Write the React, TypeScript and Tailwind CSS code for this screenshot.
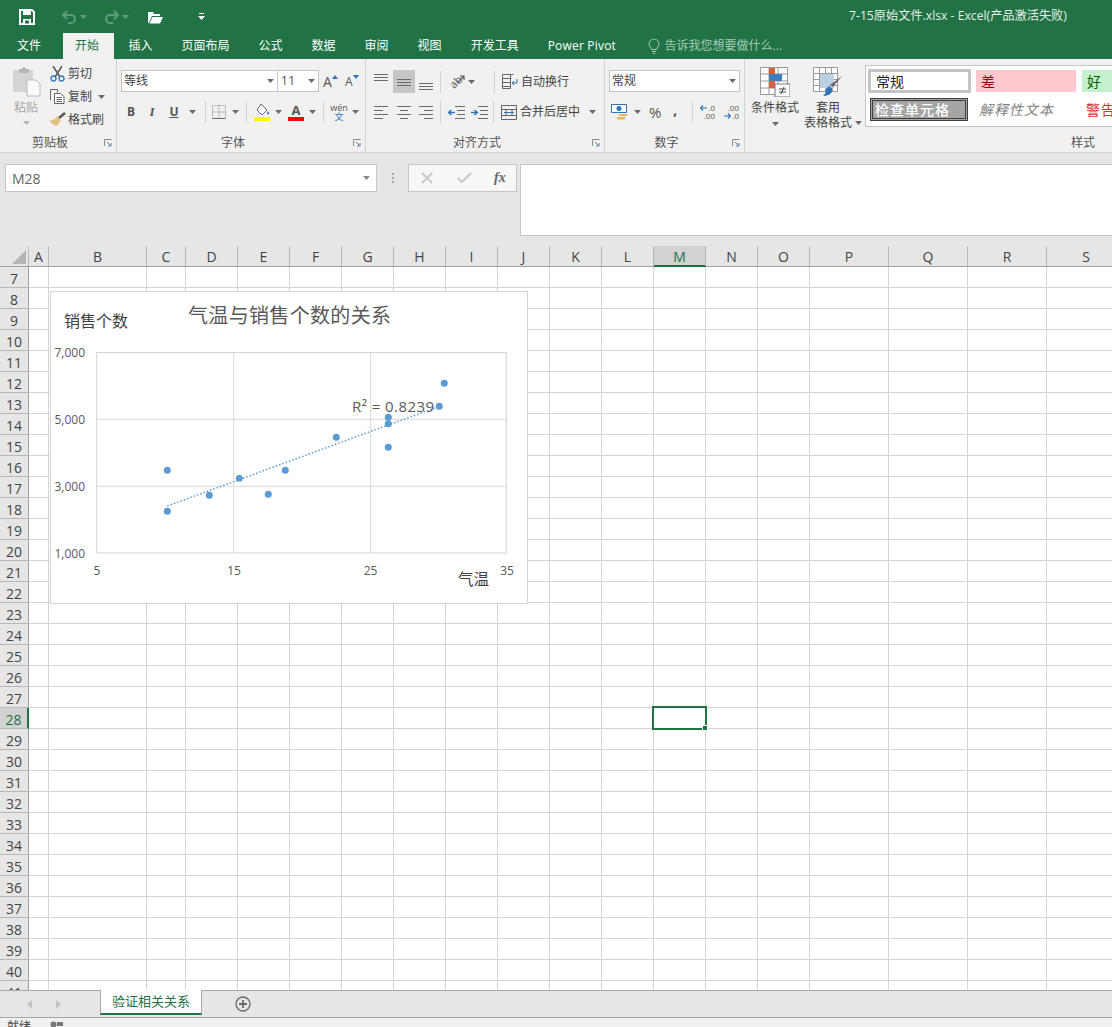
const quickGreen = "#5f9c7c";

const tabs = ["插入", "页面布局", "公式", "数据", "审阅", "视图", "开发工具"];
const columns = ["A", "B", "C", "D", "E", "F", "G", "H", "I", "J", "K", "L", "M", "N", "O", "P", "Q", "R", "S"];
const rows = Array.from({ length: 35 }, (_, i) => i + 7);
const sheetCols = "grid grid-cols-[29px_20px_98px_39px_52px_52px_52px_52px_52px_52px_52px_52px_52px_52px_52px_52px_79px_79px_79px_79px]";

const points = [
  [167.3, 470.3],
  [167.3, 511.3],
  [209.3, 495.3],
  [239.3, 478.3],
  [268.3, 494.3],
  [285.3, 470.3],
  [336.3, 437.3],
  [388.3, 447.3],
  [388.3, 423.7],
  [388.3, 417.3],
  [439.3, 406.3],
  [444.3, 383.3],
];

function Caret({ color = "#6a6a6a" }: { color?: string }) {
  return (
    <svg width="7" height="4" viewBox="0 0 7 4" className="shrink-0">
      <path d="M0 0h7L3.5 4z" fill={color} />
    </svg>
  );
}

function Sep() {
  return <div className="h-[22px] w-px shrink-0 bg-[#d2d2d2]" />;
}

function Launcher() {
  return (
    <svg width="8" height="8" viewBox="0 0 8 8" className="shrink-0">
      <path d="M.5 7V.5H7.5" fill="none" stroke="#8a8a8a" />
      <path d="M3 3l3.5 3.5M7 4v3H4" fill="none" stroke="#5f7f9f" />
    </svg>
  );
}

function Group({ width, label, children }: { width: string; label: string; children: React.ReactNode }) {
  return (
    <div className={`${width} flex shrink-0 flex-col border-r border-[#d2d2d2]`}>
      <div className="h-[74px]">{children}</div>
      <div className="flex h-[19px] items-center">
        <span className="flex-1 text-center text-[12px] leading-none text-[#555]">{label}</span>
        <span className="flex w-[16px] justify-center">
          <Launcher />
        </span>
      </div>
    </div>
  );
}

function Lines({ kind }: { kind: "left" | "center" | "right" }) {
  const d = {
    left: "M0 .5h14M0 4.5h9M0 8.5h14M0 12.5h9",
    center: "M0 .5h14M3 4.5h8M0 8.5h14M3 12.5h8",
    right: "M0 .5h14M5 4.5h9M0 8.5h14M5 12.5h9",
  }[kind];
  return (
    <svg width="14" height="13" viewBox="0 0 14 13">
      <path d={d} stroke="#6a6a6a" fill="none" />
    </svg>
  );
}

function VAlign({ top }: { top: number }) {
  return (
    <svg width="14" height="16" viewBox="0 0 14 16">
      <path d={`M0 ${top + 0.5}h14M0 ${top + 3.5}h14M0 ${top + 6.5}h14`} stroke="#6a6a6a" fill="none" />
    </svg>
  );
}

function Indent({ flip }: { flip?: boolean }) {
  return (
    <svg width="17" height="13" viewBox="0 0 17 13">
      <path d="M7 .5h10M9 4.500h8M9 8.500h8M7 12.500h10" stroke="#6a6a6a" fill="none" />
      {flip ? (
        <path d="M0 6.500h6M3.500 4l3 2.500-3 2.500" stroke="#2f75b5" strokeWidth="1.400" fill="none" />
      ) : (
        <path d="M7 6.500H1M3.500 4l-3 2.500 3 2.500" stroke="#2f75b5" strokeWidth="1.400" fill="none" />
      )}
    </svg>
  );
}

function DecimalArrow({ right }: { right?: boolean }) {
  return (
    <svg width="7" height="6" viewBox="0 0 7 6" className="shrink-0">
      {right ? (
        <path d="M0 3h6M4 .5L6.500 3 4 5.500" stroke="#2f75b5" strokeWidth="1.200" fill="none" />
      ) : (
        <path d="M7 3H1M3 .5L.5 3 3 5.500" stroke="#2f75b5" strokeWidth="1.200" fill="none" />
      )}
    </svg>
  );
}

function TitleBar() {
  return (
    <div className="flex h-[33px] shrink-0 items-center bg-[#217346]">
      <svg width="16" height="16" viewBox="0 0 16 16" className="ml-[19px]">
        <path d="M1 1h12l2 2v12H1z" fill="none" stroke="#fff" strokeWidth="2" />
        <path d="M4 1h8v5H4z" fill="#fff" />
        <path d="M4 10h8v5H4z" fill="#fff" />
        <path d="M6 11.500h4v3H6z" fill="#217346" />
      </svg>
      <svg width="15" height="14" viewBox="0 0 15 14" className="ml-[27px]">
        <path d="M5 1L1 5l4 4M1 5h8a4 4 0 0 1 0 8H6" fill="none" stroke={quickGreen} strokeWidth="2" />
      </svg>
      <span className="ml-[3px]">
        <Caret color={quickGreen} />
      </span>
      <svg width="15" height="14" viewBox="0 0 15 14" className="ml-[17px]">
        <path d="M10 1l4 4-4 4M14 5H6a4 4 0 0 0 0 8h3" fill="none" stroke={quickGreen} strokeWidth="2" />
      </svg>
      <span className="ml-[3px]">
        <Caret color={quickGreen} />
      </span>
      <svg width="17" height="14" viewBox="0 0 17 14" className="ml-[18px]">
        <path d="M1 13V2h5l1 2h6v2H5L2 13z" fill="#fff" />
        <path d="M5.500 7H16l-3 6.500H2.500z" fill="#fff" />
      </svg>
      <svg width="7" height="8" viewBox="0 0 7 8" className="ml-[34px]">
        <path d="M1 .5h5" stroke="#fff" />
        <path d="M0 3h7L3.500 7z" fill="#fff" />
      </svg>
      <span className="ml-[644px] whitespace-nowrap text-[12.200px] text-[#e4efe9]">7-15原始文件.xlsx - Excel(产品激活失败)</span>
    </div>
  );
}

function TabBar() {
  return (
    <div className="flex h-[26px] shrink-0 items-stretch bg-[#217346] pl-[2px] text-[12px] text-white">
      <div className="flex items-center px-[15px]">文件</div>
      <div className="ml-[7px] flex items-center bg-[#f1f1f1] pl-[12px] pr-[15px] text-[#217346]">开始</div>
      {tabs.map((tab) => (
        <div key={tab} className="flex items-center whitespace-nowrap px-[14.500px]">
          {tab}
        </div>
      ))}
      <div className="flex items-center whitespace-nowrap px-[14.500px] tracking-[0.2px]">Power Pivot</div>
      <div className="ml-[17px] flex items-center text-[#a5cbb6]">
        <svg width="12" height="15" viewBox="0 0 12 15">
          <path d="M3.500 10.500C3.500 8.500 1 7.500 1 5a5 5 0 0 1 10 0c0 2.500-2.500 3.500-2.500 5.500zM4 12.500h4M5 14.500h2" fill="none" stroke="#a5cbb6" />
        </svg>
        <span className="ml-[5px] whitespace-nowrap">告诉我您想要做什么...</span>
      </div>
    </div>
  );
}

function ClipboardGroup() {
  return (
    <Group width="w-[117px]" label="剪贴板">
      <div className="flex h-full">
        <div className="ml-[11px] flex w-[30px] flex-col items-center pt-[7px]">
          <svg width="29" height="31" viewBox="0 0 29 31">
            <path d="M1 4h20v22H1z" fill="#d4d4d4" />
            <path d="M7 3h3a2 2 0 0 1 4 0h3v4H7z" fill="#b5b5b5" />
            <path d="M15 14h9l4 4v12H15z" fill="#fafafa" stroke="#b9b9b9" />
          </svg>
          <span className="mt-[3px] text-[12px] leading-[16px] text-[#a6a6a6]">粘贴</span>
          <span className="mt-[5px]">
            <Caret color="#b5b5b5" />
          </span>
        </div>
        <div className="ml-[9px] flex flex-col pt-[3px] text-[12px] text-[#444]">
          <div className="flex h-[23px] items-center">
            <svg width="15" height="16" viewBox="0 0 15 16">
              <path d="M3 0l7 11M12 0L5 11" stroke="#555" strokeWidth="1.500" fill="none" />
              <circle cx="3.500" cy="12.500" r="2.500" fill="none" stroke="#2b79c2" strokeWidth="1.300" />
              <circle cx="11.500" cy="12.500" r="2.500" fill="none" stroke="#2b79c2" strokeWidth="1.300" />
            </svg>
            <span className="ml-[3px]">剪切</span>
          </div>
          <div className="flex h-[23px] items-center">
            <svg width="15" height="15" viewBox="0 0 15 15">
              <path d="M.5 11V.500h7v3" fill="none" stroke="#666" />
              <path d="M4.500 4.500h6l3.500 3v7H4.500z" fill="#fff" stroke="#666" />
              <path d="M6.500 8.500h5.500M6.500 10.500h5.500M6.500 12.500h5.500" stroke="#666" />
            </svg>
            <span className="ml-[3px]">复制</span>
            <span className="ml-[6px]">
              <Caret />
            </span>
          </div>
          <div className="-ml-[1px] flex h-[23px] items-center">
            <svg width="17" height="15" viewBox="0 0 17 15">
              <path d="M10 6l6-5" stroke="#555" strokeWidth="2.500" fill="none" />
              <path d="M8 4l4 4-4 6c-3-.5-6-3-8-5.500 3 .5 6-1 8-4.500z" fill="#e0c283" />
            </svg>
            <span className="ml-[2px]">格式刷</span>
          </div>
        </div>
      </div>
    </Group>
  );
}

function FontGroup() {
  return (
    <Group width="w-[249px]" label="字体">
      <div className="pl-[4px] pt-[11px]">
        <div className="flex h-[22px] items-stretch">
          <div className="flex w-[157px] items-center justify-between border border-[#c6c6c6] bg-white pl-[2px] pr-[3px] text-[12px] text-[#444]">
            等线
            <Caret />
          </div>
          <div className="flex w-[41px] items-center justify-between border border-l-0 border-[#c6c6c6] bg-white pl-[3px] pr-[3px] text-[12px] tracking-[0.5px] text-[#555]">
            11
            <Caret />
          </div>
          <div className="relative ml-[4px] flex w-[16px] items-center text-[14px] text-[#555]">
            A
            <svg width="6" height="4" viewBox="0 0 6 4" className="mb-[9px]">
              <path d="M0 4h6L3 0z" fill="#2f75b5" />
            </svg>
          </div>
          <div className="ml-[6px] flex w-[16px] items-center pt-[1px] text-[12px] text-[#555]">
            A
            <svg width="6" height="4" viewBox="0 0 6 4" className="mb-[10px]">
              <path d="M0 0h6L3 4z" fill="#2f75b5" />
            </svg>
          </div>
        </div>
        <div className="mt-[9px] flex h-[22px] items-center text-[#555]">
          <span className="w-[20px] text-center text-[12px] font-bold">B</span>
          <span className="w-[22px] text-center font-['Liberation_Serif',serif] text-[13px] font-bold italic">I</span>
          <span className="w-[22px] text-center text-[12px] font-bold underline">U</span>
          <span className="flex w-[14px] justify-center">
            <Caret />
          </span>
          <span className="flex w-[7px] justify-end">
            <Sep />
          </span>
          <span className="flex w-[26px] justify-center">
            <svg width="14" height="14" viewBox="0 0 14 14">
              <path d="M.5.500h13v13H.500zM7 .5v13M.5 7h13" fill="none" stroke="#8a8a8a" strokeDasharray="1 1" />
              <path d="M.5 13.500h13" stroke="#6a6a6a" />
            </svg>
          </span>
          <span className="flex w-[7px] justify-center">
            <Caret />
          </span>
          <span className="flex w-[14px] justify-center">
            <Sep />
          </span>
          <span className="flex w-[18px] justify-center">
            <svg width="17" height="18" viewBox="0 0 17 18">
              <path d="M7 1l6 6-5 5-5-5z" fill="#fff" stroke="#666" />
              <path d="M14 8c1 1.500 1.500 2.500.8 3.200-.7.6-1.600 0-1.600-1 0-.7.400-1.400.8-2.200z" fill="#2f75b5" />
              <path d="M0 14h16v4H0z" fill="#ffff00" />
            </svg>
          </span>
          <span className="flex w-[14px] justify-center">
            <Caret />
          </span>
          <span className="flex w-[22px] flex-col items-center text-[13px] font-bold leading-[13px] text-[#555]">
            A
            <span className="h-[4px] w-[16px] bg-[#ff0000]" />
          </span>
          <span className="flex w-[10px] justify-center">
            <Caret />
          </span>
          <span className="flex w-[12px] justify-center">
            <Sep />
          </span>
          <span className="flex w-[20px] flex-col items-center text-[9px] leading-[9px]">
            <span>wén</span>
            <span className="text-[#2f75b5]">文</span>
          </span>
          <span className="flex w-[12px] justify-center">
            <Caret />
          </span>
        </div>
      </div>
    </Group>
  );
}

function AlignmentGroup() {
  return (
    <Group width="w-[239px]" label="对齐方式">
      <div className="pl-[4px] pt-[11px] text-[12px] text-[#444]">
        <div className="flex h-[23px] items-center">
          <span className="flex w-[22px] justify-center">
            <VAlign top={0} />
          </span>
          <span className="ml-px flex h-[23px] w-[22px] items-center justify-center bg-[#c6c6c6]">
            <VAlign top={5} />
          </span>
          <span className="flex w-[22px] justify-center">
            <VAlign top={9} />
          </span>
          <span className="ml-[3px]">
            <Sep />
          </span>
          <span className="relative ml-[4px] flex h-[20px] w-[20px] items-center justify-center">
            <span className="-rotate-45 text-[11px] leading-none text-[#555]">ab</span>
            <svg width="9" height="9" viewBox="0 0 9 9" className="absolute right-0 top-[3px]">
              <path d="M1 8l7-7M4 1h4v4" fill="none" stroke="#555" strokeWidth="1.200" />
            </svg>
          </span>
          <span className="ml-[3px]">
            <Caret />
          </span>
          <span className="ml-[19px]">
            <Sep />
          </span>
          <svg width="16" height="16" viewBox="0 0 16 16" className="ml-[7px]">
            <path d="M.5.500h11M.5 4.500h8M.5 8.500h8M.5 12.500h8" stroke="#666" fill="none" />
            <path d="M.5.500v14h8v-14" stroke="#666" fill="none" />
            <path d="M15 5v4H10M12 7l-2 2 2 2" stroke="#2f75b5" fill="none" />
          </svg>
          <span className="ml-[3px]">自动换行</span>
        </div>
        <div className="mt-[8px] flex h-[22px] items-center">
          <span className="flex w-[22px] justify-center">
            <Lines kind="left" />
          </span>
          <span className="ml-px flex w-[22px] justify-center">
            <Lines kind="center" />
          </span>
          <span className="flex w-[22px] justify-center">
            <Lines kind="right" />
          </span>
          <span className="ml-[3px]">
            <Sep />
          </span>
          <span className="ml-[7px]">
            <Indent />
          </span>
          <span className="ml-[6px]">
            <Indent flip />
          </span>
          <span className="ml-[5px]">
            <Sep />
          </span>
          <svg width="16" height="15" viewBox="0 0 16 15" className="ml-[7px]">
            <path d="M.5.500h15v14H.5zM.5 4.500h15M.5 10.500h15M5 4.500v6M11 4.500v6" fill="none" stroke="#666" />
            <path d="M3 7.500h10" stroke="#2f75b5" />
          </svg>
          <span className="ml-[3px]">合并后居中</span>
          <span className="ml-[9px]">
            <Caret />
          </span>
        </div>
      </div>
    </Group>
  );
}

function NumberGroup() {
  return (
    <Group width="w-[140px]" label="数字">
      <div className="pl-[4px] pt-[11px]">
        <div className="flex h-[22px] w-[131px] items-center justify-between border border-[#c6c6c6] bg-white pl-[2px] pr-[3px] text-[12px] text-[#444]">
          常规
          <Caret />
        </div>
        <div className="mt-[9px] flex h-[22px] items-center text-[#555]">
          <svg width="17" height="16" viewBox="0 0 17 16" className="ml-[2px]">
            <path d="M.5.500h15v8H.5z" fill="#fff" stroke="#2f75b5" />
            <circle cx="8" cy="4.500" r="2.500" fill="#2f75b5" />
            <path d="M8 10h8v2H8zM6 13h8v2.500H6z" fill="#e0b860" />
          </svg>
          <span className="ml-[6px]">
            <Caret />
          </span>
          <span className="ml-[8px] w-[13px] text-[15px] leading-none">%</span>
          <span className="mb-[5px] ml-[11px] w-[8px] text-[15px] font-bold leading-none">,</span>
          <span className="ml-[11px]">
            <Sep />
          </span>
          <span className="ml-[6px] flex w-[16px] flex-col items-end text-[8px] leading-[8px]">
            <span className="flex items-center gap-px">
              <DecimalArrow />
              .0
            </span>
            <span>.00</span>
          </span>
          <span className="ml-[8px] flex w-[16px] flex-col items-end text-[8px] leading-[8px]">
            <span>.00</span>
            <span className="flex items-center gap-px">
              <DecimalArrow right />
              .0
            </span>
          </span>
        </div>
      </div>
    </Group>
  );
}

function StylesGroup() {
  return (
    <div className="flex min-w-0 flex-1 flex-col">
      <div className="flex h-[74px] text-[12px] text-[#444]">
        <div className="ml-[6px] flex w-[48px] flex-col items-center pt-[8px]">
          <svg width="30" height="30" viewBox="0 0 30 30">
            <path d="M.5.500h27v27H.5zM.5 7h27M.5 14h27M.5 21h27M9 .5v27M18 .5v27" fill="#fff" stroke="#9a9a9a" />
            <path d="M9 1h6v6H9zM9 14h6v7H9z" fill="#d9603b" />
            <path d="M9 7h13v7H9z" fill="#3f7fbf" />
            <path d="M15 17h15v13H15z" fill="#fff" stroke="#777" />
            <path d="M19 22h7M19 25h7M24 20l-3 7" stroke="#444" fill="none" />
          </svg>
          <span className="mt-[3px] whitespace-nowrap leading-[16px]">条件格式</span>
          <span className="mt-[6px]">
            <Caret />
          </span>
        </div>
        <div className="ml-[5px] flex w-[60px] flex-col pt-[8px]">
          <div className="flex w-[48px] flex-col items-center">
            <svg width="30" height="30" viewBox="0 0 30 30">
              <path d="M.5.500h24v24H.5zM.5 6.500h24M.5 12.500h24M.5 18.500h24M6.500.5v24M12.500.5v24M18.500.5v24" fill="#fff" stroke="#9a9a9a" />
              <path d="M7 7h14v14H7z" fill="#bccfe2" />
              <path d="M29 9l-9 11-3-2z" fill="#666" />
              <path d="M16 19l4 3c-1 5-5 7-10 7 2-1 3-4 3-7z" fill="#2f75b5" />
            </svg>
            <span className="mt-[3px] whitespace-nowrap leading-[16px]">套用</span>
          </div>
          <div className="flex items-center whitespace-nowrap leading-[14px]">
            表格格式
            <span className="ml-[3px]">
              <Caret />
            </span>
          </div>
        </div>
        <div className="ml-px mt-[6px] h-[62px] min-w-0 flex-1 overflow-hidden border border-r-0 border-[#c6c6c6] bg-white pl-[2px] pt-[3px]">
          <div className="flex h-[24px] items-stretch">
            <div className="flex w-[103px] shrink-0 items-center border-[3px] border-[#c4c4c4] pl-[5px] text-[14px] text-[#222]">常规</div>
            <div className="ml-[5px] flex h-[22px] w-[100px] shrink-0 items-center self-center bg-[#ffc7ce] pl-[5px] text-[14px] text-[#9c0006]">差</div>
            <div className="ml-[6px] flex h-[22px] w-[40px] shrink-0 items-center self-center bg-[#c6efce] pl-[5px] text-[14px] text-[#006100]">好</div>
          </div>
          <div className="mt-[5px] flex h-[23px] items-stretch">
            <div className="ml-[2px] flex w-[98px] shrink-0 items-center border-[3px] border-double border-[#3f3f3f] bg-[#a5a5a5] pl-[2px] text-[14px] font-medium tracking-[1px] text-white">
              <span className="whitespace-nowrap">检查单元格</span>
            </div>
            <div className="ml-[11px] flex w-[102px] shrink-0 items-center whitespace-nowrap text-[14px] italic tracking-[1px] text-[#7f7f7f]">解释性文本</div>
            <div className="ml-[5px] flex shrink-0 items-center whitespace-nowrap text-[14px] tracking-[1px] text-[#e03030]">警告文本</div>
          </div>
        </div>
      </div>
      <div className="flex h-[19px] items-center justify-end pr-[17px] text-[12px] leading-none text-[#555]">样式</div>
    </div>
  );
}

function Ribbon() {
  return (
    <div className="flex h-[94px] shrink-0 border-b border-[#d2d2d2] bg-[#f1f1f1]">
      <ClipboardGroup />
      <FontGroup />
      <AlignmentGroup />
      <NumberGroup />
      <StylesGroup />
    </div>
  );
}

function FormulaBar() {
  return (
    <div className="flex h-[93px] shrink-0 items-start bg-[#e6e6e6] pl-[5px] pt-[11px]">
      <div className="flex h-[28px] w-[372px] items-center justify-between border border-[#c6c6c6] bg-white pl-[6px] pr-[6px] text-[14px] text-[#666]">
        M28
        <Caret color="#8a8a8a" />
      </div>
      <div className="ml-[14px] flex h-[28px] w-[3px] flex-col items-center justify-center gap-[2px]">
        <span className="h-[2px] w-[2px] bg-[#a6a6a6]" />
        <span className="h-[2px] w-[2px] bg-[#a6a6a6]" />
        <span className="h-[2px] w-[2px] bg-[#a6a6a6]" />
      </div>
      <div className="ml-[14px] flex h-[28px] w-[109px] items-center border border-[#c6c6c6] bg-[#f7f7f7]">
        <svg width="12" height="12" viewBox="0 0 12 12" className="ml-[12px]">
          <path d="M1 1l10 10M11 1L1 11" stroke="#c8c8c8" strokeWidth="1.800" />
        </svg>
        <svg width="15" height="12" viewBox="0 0 15 12" className="ml-[24px]">
          <path d="M1 6l4 4 9-9" fill="none" stroke="#c8c8c8" strokeWidth="2.200" />
        </svg>
        <span className="ml-[22px] font-['Liberation_Serif',serif] text-[14px] font-bold italic leading-none text-[#666]">fx</span>
      </div>
      <div className="ml-[3px] h-[72px] min-w-0 flex-1 border border-r-0 border-[#c6c6c6] bg-white" />
    </div>
  );
}

function ScatterChart() {
  return (
    <div className="absolute left-[50px] top-[45px] h-[313px] w-[478px] border border-[#d4d4d4] bg-white">
      <svg width="476" height="311" viewBox="51 292 476 311" className="block">
        <path d="M233.700 352.500V553M370.700 352.500V553M96.700 419.300H506.300M96.700 486.300H506.300" stroke="#d9d9d9" fill="none" />
        <rect x="96.700" y="352.500" width="409.600" height="200.500" fill="none" stroke="#d4d4d4" />
        <line x1="167.300" y1="506" x2="439.300" y2="406.300" stroke="#5b9bd5" strokeWidth="1.500" strokeDasharray="1.500 2" />
        {points.map(([x, y]) => (
          <circle key={`${x}-${y}`} cx={x} cy={y} r="3.500" fill="#5b9bd5" />
        ))}
        <g fill="#595959" fontSize="12" textAnchor="end">
          <text x="85" y="356.500">7,000</text>
          <text x="85" y="423.500">5,000</text>
          <text x="85" y="490.500">3,000</text>
          <text x="85" y="557.500">1,000</text>
        </g>
        <g fill="#595959" fontSize="12" textAnchor="middle">
          <text x="97" y="575">5</text>
          <text x="234" y="575">15</text>
          <text x="370.500" y="575">25</text>
          <text x="507" y="575">35</text>
        </g>
        <text x="188" y="323" fontSize="20" fill="#595959" textLength="203">气温与销售个数的关系</text>
        <text x="64" y="327" fontSize="16" fill="#404040">销售个数</text>
        <text x="458" y="585" fontSize="15.500" fill="#404040">气温</text>
        <text x="352" y="411.500" fontSize="15" fill="#595959" textLength="82">R² = 0.8239</text>
      </svg>
    </div>
  );
}

function Sheet() {
  return (
    <div className="relative h-[744px] shrink-0 overflow-hidden bg-white">
      <div className={`${sheetCols} h-[21px] w-[1126px] border-b border-[#9f9f9f] bg-[#e6e6e6]`}>
        <div className="flex items-end justify-end border-r border-[#b8b8b8] pb-[2px] pr-[2px]">
          <svg width="14" height="14" viewBox="0 0 14 14">
            <path d="M14 0v14H0z" fill="#b5b5b5" />
          </svg>
        </div>
        {columns.map((col) => (
          <div
            key={col}
            className={
              col === "M"
                ? "-mb-px flex items-center justify-center border-b-2 border-r border-b-[#217346] border-r-[#b8b8b8] bg-[#d2d2d2] pt-[2px] text-[14px] leading-none text-[#217346]"
                : "flex items-center justify-center border-r border-[#b8b8b8] pt-[2px] text-[14px] leading-none text-[#444]"
            }
          >
            {col}
          </div>
        ))}
      </div>
      <div className={`${sheetCols} w-[1126px] auto-rows-[21px]`}>
        {rows.map((row) => [
          <div
            key={`h${row}`}
            className={
              row === 28
                ? "flex items-center justify-center border-b border-r-2 border-b-[#b8b8b8] border-r-[#217346] bg-[#d2d2d2] pt-[3px] text-[14px] leading-none text-[#217346]"
                : "flex items-center justify-center border-b border-r border-b-[#b8b8b8] border-r-[#9f9f9f] bg-[#e6e6e6] pt-[3px] text-[14px] leading-none text-[#444]"
            }
          >
            {row}
          </div>,
          ...columns.map((col) => <div key={`${col}${row}`} className="border-b border-r border-[#d4d4d4]" />),
        ])}
      </div>
      <ScatterChart />
      <div className="absolute left-[652px] top-[460px] h-[24px] w-[55px] border-2 border-[#217346]">
        <div className="absolute -bottom-[3px] -right-[3px] h-[6px] w-[6px] border border-white bg-[#217346]" />
      </div>
    </div>
  );
}

function SheetBar() {
  return (
    <div className="flex h-[28px] shrink-0 border-y border-[#a6a6a6] bg-[#e6e6e6]">
      <svg width="5" height="9" viewBox="0 0 5 9" className="ml-[27px] mt-[9px]">
        <path d="M5 0v9L0 4.500z" fill="#c4c4c4" />
      </svg>
      <svg width="5" height="9" viewBox="0 0 5 9" className="ml-[24px] mt-[9px]">
        <path d="M0 0v9l5-4.500z" fill="#c4c4c4" />
      </svg>
      <div className="-mt-px ml-[39px] flex h-[25px] w-[102px] items-center justify-center border-x border-b-2 border-x-[#a6a6a6] border-b-[#217346] bg-white text-[13px] text-[#217346]">
        验证相关关系
      </div>
      <svg width="16" height="16" viewBox="0 0 16 16" className="ml-[33px] mt-[5px]">
        <circle cx="8" cy="8" r="7" fill="none" stroke="#6a6a6a" strokeWidth="1.300" />
        <path d="M8 4v8M4 8h8" stroke="#6a6a6a" strokeWidth="1.800" />
      </svg>
    </div>
  );
}

function StatusBar() {
  return (
    <div className="flex h-[9px] shrink-0 overflow-hidden bg-[#f1f1f1] pl-[7px] text-[12px] leading-[16px] text-[#444]">
      <span className="mt-[1px]">就绪</span>
      <svg width="14" height="10" viewBox="0 0 14 10" className="ml-[19px] mt-[3px]">
        <circle cx="3.500" cy="3.500" r="3" fill="#777" />
        <path d="M7 1h6v4H7z" fill="#777" />
      </svg>
    </div>
  );
}

export default function App() {
  return (
    <div className="flex h-[1027px] w-[1112px] flex-col overflow-hidden bg-white font-['Open_Sans','Noto_Sans_CJK_SC',sans-serif]">
      <TitleBar />
      <TabBar />
      <Ribbon />
      <FormulaBar />
      <Sheet />
      <SheetBar />
      <StatusBar />
    </div>
  );
}
